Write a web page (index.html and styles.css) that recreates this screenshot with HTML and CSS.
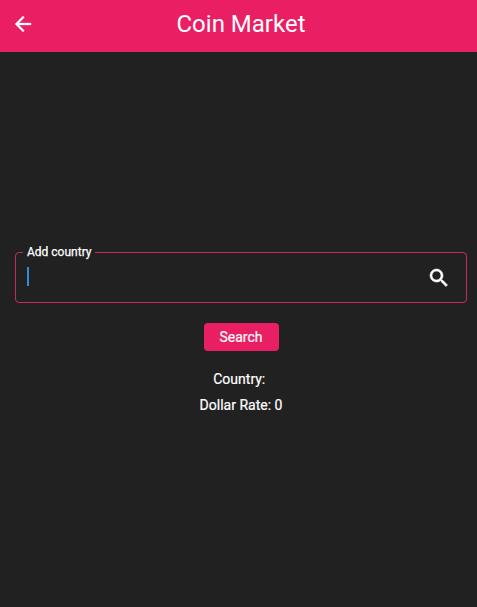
FILE: index.html
```html
<!DOCTYPE html>
<html lang="en">
<head>
<meta charset="utf-8">
<title>Coin Market</title>
<link rel="stylesheet" href="styles.css">
</head>
<body>
<header class="bar">
  <svg class="back" viewBox="0 0 24 24"><path d="M20 11H7.83l5.59-5.59L12 4l-8 8 8 8 1.41-1.41L7.83 13H20v-2z"/></svg>
  <h1 class="title">Coin Market</h1>
</header>
<main class="content">
  <fieldset class="field">
    <legend class="label">Add country</legend>
    <div class="row">
      <span class="caret"></span>
      <svg class="search-icon" viewBox="0 0 24 24"><path d="M15.5 14h-.79l-.28-.27A6.471 6.471 0 0 0 16 9.5 6.5 6.5 0 1 0 9.5 16c1.61 0 3.09-.59 4.23-1.57l.27.28v.79l5 4.99L20.49 19l-4.99-5zm-6 0C7.01 14 5 11.99 5 9.5S7.01 5 9.5 5 14 7.01 14 9.5 11.99 14 9.5 14z"/></svg>
    </div>
  </fieldset>
  <button class="button" type="button">Search</button>
  <p class="result">Country:&nbsp;</p>
  <p class="result rate">Dollar Rate: 0</p>
</main>
</body>
</html>
```

FILE: styles.css
```css
* { box-sizing: border-box; }
body {
  margin: 0;
  height: 607px;
  overflow: hidden;
  background: #212121;
  color: #fff;
  font-family: Roboto, sans-serif;
}
.bar {
  display: grid;
  grid-template-columns: 46px 1fr 41px;
  align-items: center;
  height: 52px;
  padding-bottom: 4px;
  background: #e91e63;
}
.back { width: 24px; height: 24px; margin-left: 11px; fill: #fff; stroke: #fff; stroke-width: 0.3; }
.title {
  margin: 0;
  text-align: center;
  font-size: 24px;
  line-height: 28px;
  font-weight: 400;
}
.content {
  display: flex;
  flex-direction: column;
  align-items: center;
  padding: 193px 10px 0 15px;
}
.field {
  width: 100%;
  height: 58px;
  margin: 0;
  padding: 0 15px 0 7px;
  border: 1px solid #c92a5e;
  border-radius: 4px;
}
.label {
  height: 14px;
  padding: 0 4px;
  font-size: 12px;
  line-height: 14px;
  -webkit-text-stroke: 0.25px #fff;
}
.row {
  display: flex;
  align-items: flex-start;
  justify-content: space-between;
  height: 36px;
}
.caret { width: 2px; height: 19px; margin: 8px 0 0 4px; background: #338cd0; }
.search-icon {
  width: 24px;
  height: 24px;
  margin-top: 7px;
  fill: #fff;
  stroke: #fff;
  stroke-width: 0.6;
}
.button {
  width: 75px;
  height: 28px;
  margin: 20px 0 0;
  padding: 0;
  border: 0;
  border-radius: 4px;
  background: #e91e63;
  color: #fff;
  font: 14px/28px Roboto, sans-serif;
  -webkit-text-stroke: 0.2px #fff;
}
.result {
  margin: 20px 0 0;
  font-size: 14px;
  line-height: 16px;
  -webkit-text-stroke: 0.2px #fff;
}
.rate { margin-top: 10px; }
```
